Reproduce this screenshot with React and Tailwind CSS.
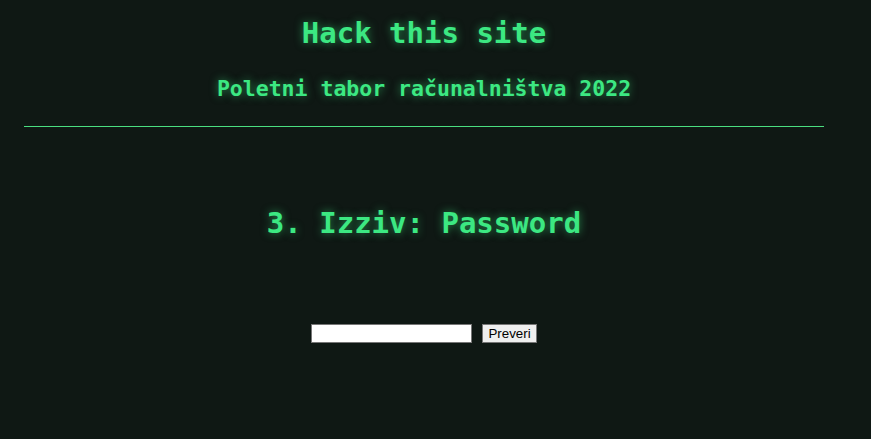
export default function App() {
  return (
    <div className="min-h-[439px] w-full bg-[#0f1814] font-['DejaVu_Sans_Mono',monospace] text-[#3ce882]">
      <div className="w-[800px] ml-[24px] flex flex-col items-center">
        <h1 className="mt-[14px] text-[29px] leading-[38px] font-bold [text-shadow:0_0_8px_rgba(60,232,130,0.55)]">
          Hack this site
        </h1>
        <h2 className="mt-[23px] text-[21.5px] leading-[28px] font-bold [text-shadow:0_0_8px_rgba(60,232,130,0.55)]">
          Poletni tabor računalništva 2022
        </h2>
        <hr className="mt-[23px] w-full border-0 border-t border-[#4ade80]" />
        <h1 className="mt-[77px] text-[29px] leading-[38px] font-bold [text-shadow:0_0_8px_rgba(60,232,130,0.55)]">
          3. Izziv: Password
        </h1>
        <form className="mt-[82px] flex items-center gap-[10px] font-['Liberation_Sans',Arial,sans-serif]">
          <input
            type="password"
            className="w-[161px] h-[19px] bg-white border border-[#767676] text-black text-[13px] px-1 outline-none"
          />
          <button
            type="button"
            className="h-[19px] px-[5px] bg-[#efefef] border border-[#767676] text-black text-[13.33px] leading-none"
          >
            Preveri
          </button>
        </form>
      </div>
    </div>
  );
}
